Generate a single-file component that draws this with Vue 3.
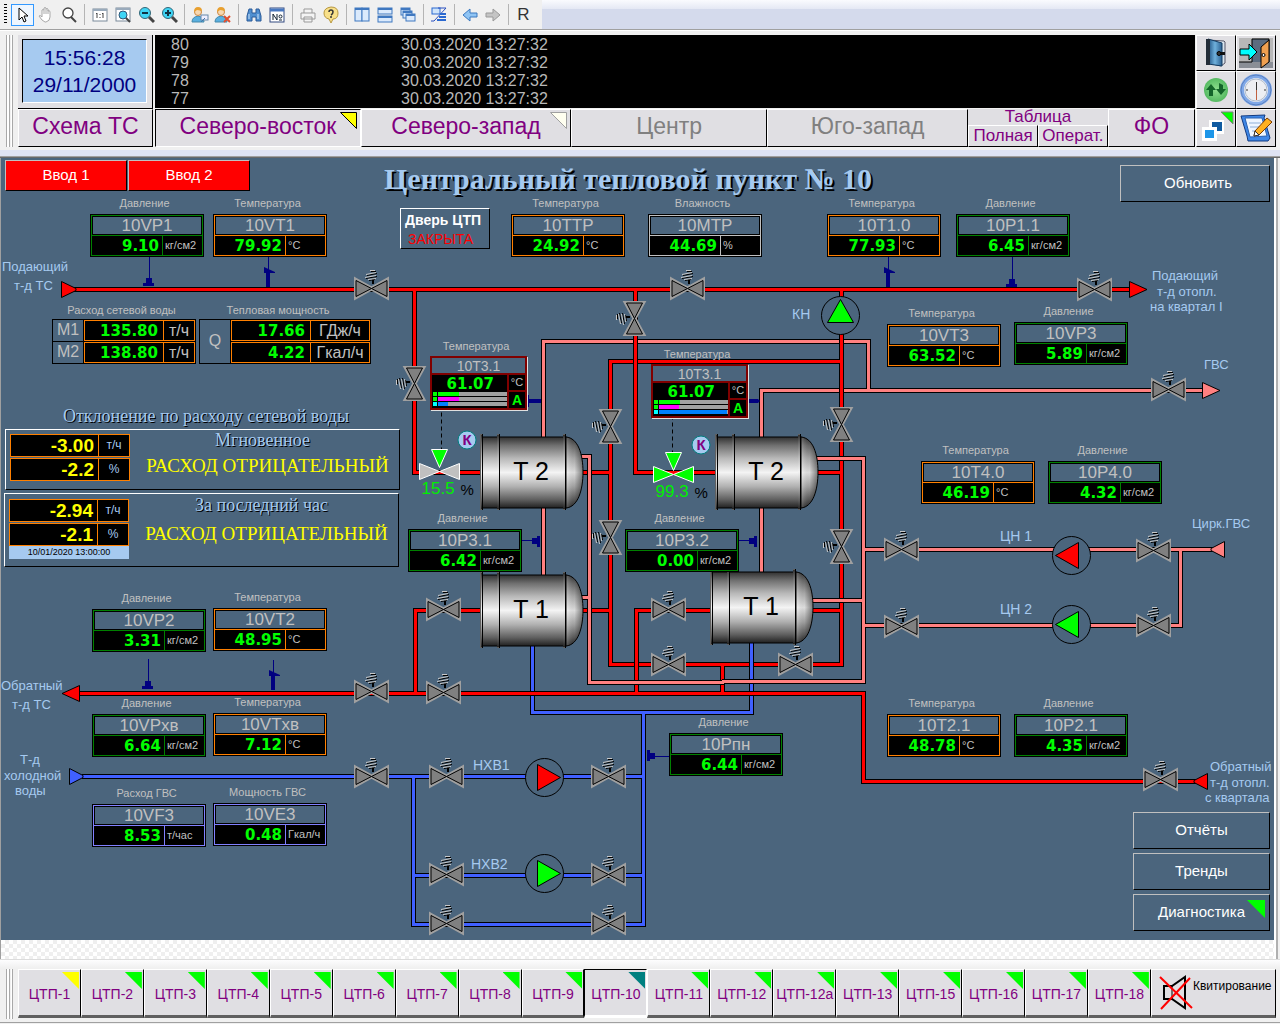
<script setup>
const ORIGIN_Y = 158
const at = (x, y) => ({ left: x + 'px', top: y - ORIGIN_Y + 'px' })

const tools = [
  [
    { name: 'Выбор', active: true, art: '<path d="M5 2v12l3-3 2 5 2-1-2-5h4z" fill="#fff" stroke="#000"/>' },
    { name: 'Панорама', art: '<path d="M5 9V4q1-1 2 0V2q1-1 2 0v1q1-1 2 0v2q2-1 2 1v5q0 4-4 5H8Q5 15 2 10q0-1 2 0l1 1zM7 4v4M9 3v5M11 4v4" fill="#fff" stroke="#a8a8a8"/>' },
    { name: 'Лупа', art: '<circle cx="8" cy="7" r="5" fill="#fff" stroke="#444" stroke-width="1.3"/><path d="M11 11l5 5" stroke="#444" stroke-width="2"/>' }
  ],
  [
    { name: 'Масштаб 1:1', art: '<rect x="2" y="3" width="14" height="12" fill="#fff" stroke="#7a8a9a"/><path d="M2 4h14" stroke="#9ab" stroke-width="2"/><path d="M5 8l1-1v5M11 8l1-1v5M9 8v1M9 11v1" stroke="#444" fill="none"/>' },
    { name: 'Вписать', art: '<rect x="2" y="2" width="14" height="13" fill="#fff" stroke="#7a8a9a"/><path d="M2 3h14" stroke="#9ab" stroke-width="2"/><circle cx="9" cy="9" r="4" fill="#3fd5f5" stroke="#357"/><path d="M12 12l4 4" stroke="#444" stroke-width="2"/>' },
    { name: 'Уменьшить', art: '<circle cx="8" cy="7" r="5.500" fill="#3fd5f5" stroke="#367"/><path d="M5 7h6" stroke="#134" stroke-width="2"/><path d="M12 11l5 5" stroke="#444" stroke-width="3"/>' },
    { name: 'Увеличить', art: '<circle cx="8" cy="7" r="5.500" fill="#3fd5f5" stroke="#367"/><path d="M5 7h6M8 4v6" stroke="#134" stroke-width="2"/><path d="M12 11l5 5" stroke="#444" stroke-width="3"/>' }
  ],
  [
    { name: 'Вход', art: '<path d="M1 16q0-5 6-6 6 1 6 6z" fill="#5ab0e0" stroke="#48a"/><circle cx="7" cy="6" r="3.500" fill="#f8d8b0" stroke="#c84"/><path d="M3 6q0-5 4-5t4 4q-4-1-5-1z" fill="#e8a030"/><rect x="10" y="9" width="7" height="5" fill="#eef" stroke="#68a"/><path d="M10 16l4-4" stroke="#47a"/>' },
    { name: 'Выход', art: '<path d="M1 16q0-5 6-6 6 1 6 6z" fill="#5ab0e0" stroke="#48a"/><circle cx="7" cy="6" r="3.500" fill="#f8d8b0" stroke="#c84"/><path d="M3 6q0-5 4-5t4 4q-4-1-5-1z" fill="#e8a030"/><path d="M10 10l6 6M16 10l-6 6" stroke="#e05030" stroke-width="2"/>' }
  ],
  [
    { name: 'Поиск', art: '<path d="M4 3h3v4h4V3h3l2 7v5h-5v-4H7v4H2v-5z" fill="#4f8fd0" stroke="#2a5a98"/><path d="M4 8v5M13 8v5" stroke="#cfe4fa"/>' },
    { name: 'Номер', art: '<rect x="2" y="2" width="14" height="14" fill="#fff" stroke="#334a80"/><path d="M2 4h14" stroke="#4878c0" stroke-width="3"/><path d="M5 14V8l4 6V8M11 14h3" stroke="#123" fill="none"/><circle cx="12.500" cy="10.500" r="1.500" fill="none" stroke="#123"/>' }
  ],
  [
    { name: 'Печать', art: '<path d="M5 7V3h8v4M2 7h14v6H2zM5 11h8v5H5z" fill="#f4f4f4" stroke="#999"/>' },
    { name: 'Справка', art: '<path d="M9 1q7 0 7 6t-5 6l-2 4-2-4q-5-1-5-6t7-6z" fill="#f8e08a" stroke="#b89840"/><path d="M7 6q0-2 2-2t2 2-2 3M9 10v2" stroke="#333" fill="none" stroke-width="1.500"/>' }
  ],
  [
    { name: 'Рядом', art: '<rect x="2" y="2" width="7" height="13" fill="#dbeafc" stroke="#3f78c0"/><rect x="9" y="2" width="7" height="13" fill="#dbeafc" stroke="#3f78c0"/><path d="M2 3h14" stroke="#3f78c0" stroke-width="2"/>' },
    { name: 'Друг под другом', art: '<rect x="2" y="2" width="14" height="6" fill="#dbeafc" stroke="#3f78c0"/><rect x="2" y="10" width="14" height="6" fill="#dbeafc" stroke="#3f78c0"/><path d="M2 3h14M2 11h14" stroke="#3f78c0" stroke-width="2"/>' },
    { name: 'Каскад', art: '<g fill="#dbeafc" stroke="#3f78c0"><rect x="2" y="2" width="9" height="7"/><rect x="4" y="5" width="9" height="7"/><rect x="7" y="8" width="9" height="7"/></g><path d="M2 3h9M4 6h9M7 9h9" stroke="#3f78c0" stroke-width="2"/>' }
  ],
  [
    { name: 'Настройка', art: '<rect x="2" y="2" width="8" height="6" fill="#cfe4fa" stroke="#2a68d0"/><path d="M8 2h8L4 15H1" fill="none" stroke="#2a50c0"/><path d="M10 8h6M9 11h7M7 14h9" stroke="#2a68d0" stroke-width="2"/>' }
  ],
  [
    { name: 'Назад', art: '<path d="M2 9l7-6v4h7v4H9v4z" fill="#8fc4f4" stroke="#3a78c0"/>' },
    { name: 'Вперёд', art: '<path d="M16 9L9 3v4H2v4h7v4z" fill="#c4c4c4" stroke="#999"/>' }
  ]
]

const log = [80, 79, 78, 77].map((id) => ({ id, time: '30.03.2020 13:27:32' }))

const K = 'кг/см2'
const C = '°C'
const sensors = [
  { x: 90, y: 214, cap: 'Давление', tag: '10VP1', v: '9.10', u: K, kind: 'pressure' },
  { x: 213, y: 214, cap: 'Температура', tag: '10VT1', v: '79.92', u: C, kind: 'temp' },
  { x: 511, y: 214, cap: 'Температура', tag: '10TTP', v: '24.92', u: C, kind: 'temp' },
  { x: 648, y: 214, cap: 'Влажность', tag: '10MTP', v: '44.69', u: '%', kind: 'plain' },
  { x: 827, y: 214, cap: 'Температура', tag: '10T1.0', v: '77.93', u: C, kind: 'temp' },
  { x: 956, y: 214, cap: 'Давление', tag: '10P1.1', v: '6.45', u: K, kind: 'pressure' },
  { x: 887, y: 324, cap: 'Температура', tag: '10VT3', v: '63.52', u: C, kind: 'temp' },
  { x: 1014, y: 322, cap: 'Давление', tag: '10VP3', v: '5.89', u: K, kind: 'pressure' },
  { x: 921, y: 461, cap: 'Температура', tag: '10T4.0', v: '46.19', u: C, kind: 'temp' },
  { x: 1048, y: 461, cap: 'Давление', tag: '10P4.0', v: '4.32', u: K, kind: 'pressure' },
  { x: 887, y: 714, cap: 'Температура', tag: '10T2.1', v: '48.78', u: C, kind: 'temp' },
  { x: 1014, y: 714, cap: 'Давление', tag: '10P2.1', v: '4.35', u: K, kind: 'pressure' },
  { x: 408, y: 529, cap: 'Давление', tag: '10P3.1', v: '6.42', u: K, kind: 'pressure' },
  { x: 625, y: 529, cap: 'Давление', tag: '10P3.2', v: '0.00', u: K, kind: 'pressure' },
  { x: 92, y: 609, cap: 'Давление', tag: '10VP2', v: '3.31', u: K, kind: 'pressure' },
  { x: 213, y: 608, cap: 'Температура', tag: '10VT2', v: '48.95', u: C, kind: 'temp' },
  { x: 92, y: 714, cap: 'Давление', tag: '10VPхв', v: '6.64', u: K, kind: 'pressure' },
  { x: 213, y: 713, cap: 'Температура', tag: '10VTхв', v: '7.12', u: C, kind: 'temp' },
  { x: 92, y: 804, cap: 'Расход ГВС', tag: '10VF3', v: '8.53', u: 'т/час', kind: 'flow' },
  { x: 213, y: 803, cap: 'Мощность ГВС', tag: '10VE3', v: '0.48', u: 'Гкал/ч', kind: 'flow' },
  { x: 669, y: 733, cap: 'Давление', tag: '10Рпн', v: '6.44', u: K, kind: 'pressure' }
]

const loops = [
  { x: 430, y: 356, bars: [30, 30, 14] },
  { x: 651, y: 364, bars: [30, 29, 99] }
]

const RED = '#ff0000'
const PINK = '#ff8080'
const BLUE = '#4060ff'
const pipes = [
  { c: RED, d: 'M841.5 361.5H610.5V664.5H841.5V400M583 472.5H610.5M583 610.5H610.5M817 472.5H841.5M811 610.5H841.5M722.5 664.5V693' },
  { c: RED, d: 'M710 610.5H636.5V693' },
  { c: BLUE, d: 'M82 776.5H643.5M532.5 640V712.5H751.5V640M643.5 712.5V924.5H413.5V776.5M413.5 875.5H643.5' },
  { c: PINK, d: 'M543.5 440V341.5H868.5V390.5M761.5 440V390.5H1205M543.5 505V578M761.5 505V575M578 456.5H589.5V682.5H724M578 597.5H589.5M722 681.5H863.5V458.5H812M808 600.5H863.5M863.5 549.5H1213M863.5 625.5H1180.5V549.5' },
  { c: RED, d: 'M74 289.5H1132M841.5 289.5V440M830 361.5H841.5M414.5 289.5V472.5H482M635.5 289.5V472.5H717' },
  { c: RED, d: 'M78 693.5H863.5V781.5H1196M482 610.5H415.5V693.5M636.5 687V693.5M722.5 687V693.5' }
]

const arrows = [
  { c: RED, p: '61.5,281.5 76,288.5 76,290.5 61.5,297.5' },
  { c: RED, p: '1129.5,281.5 1147,289.5 1129.5,297.5' },
  { c: PINK, p: '1202.5,382.5 1220,390.5 1202.5,398.5' },
  { c: PINK, p: '1224.5,541.5 1211,548.5 1211,550.5 1224.5,557.5' },
  { c: RED, p: '1207.5,773.5 1194,780.5 1194,782.5 1207.5,789.5' },
  { c: RED, p: '79.500,685.5 62,693.5 79.500,701.5' },
  { c: BLUE, p: '69.500,768.5 83,775.5 83,777.5 69.500,784.5' }
]

const valves = [
  [371, 288], [687, 288], [1094, 289], [1168, 389], [901, 549], [901, 626], [1153, 550], [1153, 625],
  [1160, 779], [371, 691], [371, 776], [443, 692], [446, 776], [446, 874], [446, 923],
  [608, 776], [608, 874], [608, 923], [668, 664], [795, 664], [443, 609], [668, 609]
]
const sideValves = [[634, 319], [414, 384], [610, 427], [610, 538], [841, 425], [841, 547]]

const pumps = [
  { x: 840.5, y: 315.5, c: '#00ff00', turn: -90 },
  { x: 1071.5, y: 555.5, c: '#ff0000', turn: 180 },
  { x: 1071.5, y: 624.5, c: '#00ff00', turn: 180 },
  { x: 544.5, y: 777.5, c: '#ff0000', turn: 0 },
  { x: 544.5, y: 873.5, c: '#00ff00', turn: 0 }
]

const tanks = [
  { x: 480, y: 434, t: 'T 2' },
  { x: 480, y: 572, t: 'T 1' },
  { x: 715, y: 434, t: 'T 2' },
  { x: 710, y: 569, t: 'T 1' }
]

const taps = [
  { x: 149, y: 286, turn: 0 },
  { x: 1012, y: 287, turn: 0 },
  { x: 148, y: 689, turn: 0 },
  { x: 540, y: 541, turn: -90 },
  { x: 757, y: 541, turn: -90 },
  { x: 647, y: 756, turn: 90 }
]
const probes = [[268, 287], [888, 287], [273, 690]]

const regulators = [
  { x: 439.5, y: 471.5, c: '#c0c0c0', v: '15.5', lineX: 441.5, kx: 467, ky: 440 },
  { x: 673.5, y: 474.5, c: '#00ff00', v: '99.3', lineX: 672.5, kx: 701, ky: 445 }
]

const labels = [
  [2, 271, 'Подающий'], [14, 290, 'т-д ТС'],
  [1152, 280, 'Подающий'], [1157, 296, 'т-д отопл.'], [1150, 311, 'на квартал I'],
  [1204, 369, 'ГВС'], [1192, 528, 'Цирк.ГВС'],
  [1210, 771, 'Обратный'], [1210, 787, 'т-д отопл.'], [1205, 802, 'с квартала'],
  [1, 690, 'Обратный'], [12, 709, 'т-д ТС'],
  [20, 764, 'Т-д'], [4, 780, 'холодной'], [15, 795, 'воды']
]
const pumpLabels = [
  [792, 319, 'КН'], [1000, 541, 'ЦН 1'], [1000, 614, 'ЦН 2'], [473, 770, 'НХВ1'], [471, 869, 'НХВ2']
]

const stations = ['1', '2', '3', '4', '5', '6', '7', '8', '9', '10', '11', '12', '12а', '13', '15', '16', '17', '18']
const flagOf = (n) => (n === '1' ? 'yellow' : n === '10' ? 'teal' : 'green')
</script>

<template>
  <div class="app">
    <div class="toolbar">
      <div class="tools">
        <span class="dots"></span>
        <template v-for="(group, i) in tools" :key="i">
          <button
            v-for="tool in group"
            :key="tool.name"
            class="tool"
            :class="{ active: tool.active }"
            :aria-label="tool.name"
          >
            <svg width="18" height="18" viewBox="0 0 18 18" fill="none" v-html="tool.art"></svg>
          </button>
          <span class="sep"></span>
        </template>
        <button class="tool letter">R</button>
      </div>
    </div>

    <header class="header">
      <span class="grip"></span>
      <div class="left-col">
        <div class="clock-frame">
          <div class="clock"><span>15:56:28</span><span>29/11/2000</span></div>
        </div>
        <button class="nav">Схема ТС</button>
      </div>
      <div class="mid-col">
        <div class="log">
          <table>
            <tbody>
              <tr v-for="row in log" :key="row.id">
                <td class="log-id">{{ row.id }}</td>
                <td>{{ row.time }}</td>
              </tr>
            </tbody>
          </table>
        </div>
        <nav class="navs">
          <button class="nav w-ne pressed">
            Северо-восток
            <svg class="nav-flag" width="18" height="18"><path d="M.5.5h16v16z" fill="#ffff00" stroke="#000" /></svg>
          </button>
          <button class="nav w-nw">
            Северо-запад
            <svg class="nav-flag" width="18" height="18"><path d="M.5.5h16v16z" fill="#fffff0" stroke="#a0a0a0" /></svg>
          </button>
          <button class="nav w-c muted">Центр</button>
          <button class="nav w-sw muted">Юго-запад</button>
          <div class="tabs w-tab">
            <span class="tabs-title">Таблица</span>
            <div class="tabs-row">
              <button class="nav small">Полная</button>
              <button class="nav small">Операт.</button>
            </div>
          </div>
          <button class="nav w-fo">ФО</button>
        </nav>
      </div>
      <div class="icon-grid">
        <button class="icon-btn" aria-label="Журнал">
          <svg width="30" height="32" viewBox="0 0 30 32">
            <defs><linearGradient id="book"><stop offset="0" stop-color="#1d4f80" /><stop offset=".5" stop-color="#6fb0dc" /><stop offset="1" stop-color="#2a5f90" /></linearGradient></defs>
            <path d="M7 3l16 1 1 1v21l-4 3-13-3z" fill="#d8e4ee" stroke="#556" />
            <path d="M7 2l14 4v23L7 27z" fill="url(#book)" stroke="#123a60" />
            <path d="M5 2h4v26H5z" fill="#222c38" />
            <path d="M16 15h8v3h-8z" fill="#111" /><circle cx="18" cy="16.500" r="2" fill="#333" stroke="#000" />
          </svg>
        </button>
        <button class="icon-btn" aria-label="Выход из системы">
          <svg width="36" height="32" viewBox="0 0 36 32">
            <path d="M1 1h34v25H1z" fill="#b8b8b8" /><path d="M1 25h34v6H1z" fill="#8a8e96" />
            <path d="M14 25V2h17v23" fill="#5c6c80" stroke="#000" />
            <path d="M1 25h13" stroke="#000" />
            <path d="M23 10l8-7v22l-8 6z" fill="#f0a050" stroke="#000" /><circle cx="25.500" cy="18" r="1.500" fill="#fff" stroke="#000" />
            <path d="M2 12h9V7l8 8-8 8v-5H2z" fill="#00ffff" stroke="#000" />
          </svg>
        </button>
        <button class="icon-btn" aria-label="Обмен">
          <svg width="28" height="28" viewBox="0 0 28 28">
            <defs><radialGradient id="sync"><stop offset="0" stop-color="#8fe08f" /><stop offset="1" stop-color="#56ba62" /></radialGradient></defs>
            <circle cx="14" cy="14" r="12" fill="url(#sync)" />
            <path d="M4 14l5-6 5 6h-3v6H7v-6zM14 13l5 6 5-6h-3V9l-4-2v6z" fill="#14652a" />
          </svg>
        </button>
        <button class="icon-btn" aria-label="Время">
          <svg width="32" height="32" viewBox="0 0 32 32">
            <circle cx="16" cy="16" r="14" fill="#eceef2" stroke="#7fa8e8" stroke-width="4" />
            <circle cx="16" cy="16" r="15" fill="none" stroke="#5a80c0" /><circle cx="16" cy="16" r="11" fill="none" stroke="#b0bccc" />
            <path d="M16.500 8v9M6 16h2M24 16h2" stroke="#333" /><path d="M16.500 16v10" stroke="#c06040" />
          </svg>
        </button>
        <button class="icon-btn" aria-label="Окна">
          <svg width="38" height="36" viewBox="0 0 38 36">
            <path d="M12 10h15v14H12z" fill="#fff" /><path d="M15 12h10v9H15z" fill="#105aa0" />
            <path d="M5 17h15v14H5z" fill="#fff" /><path d="M8 20h9v8H8z" fill="#1e96e8" />
            <path d="M24 2h12v12z" fill="#00ff00" stroke="#808080" />
          </svg>
        </button>
        <button class="icon-btn" aria-label="Заметки">
          <svg width="34" height="34" viewBox="0 0 34 34">
            <path d="M2 5l24-1-1 3 6 20-2 3H9l-1-5z" fill="#3f88e8" stroke="#123a80" />
            <path d="M6 7l17 0 5 18-17 1z" fill="#eef6ff" stroke="#2a60b0" />
            <path d="M10 12h12M11 16h10M13 20h7" stroke="#8fb0d8" />
            <path d="M15 25l1-5L28 7l5 4-13 13z" fill="#ffb020" stroke="#7a3a00" /><path d="M15 25l1-5 4 4z" fill="#fff" stroke="#333" />
          </svg>
        </button>
      </div>
    </header>

    <div class="strip"></div>

    <main class="mimic">
      <svg class="scheme" width="1274" height="782" viewBox="0 158 1274 782">
        <defs>
          <linearGradient id="steel" x1="0" y1="0" x2="0" y2="1">
            <stop offset="0" stop-color="#303030" /><stop offset=".12" stop-color="#707070" />
            <stop offset=".3" stop-color="#b8b8b8" /><stop offset=".5" stop-color="#f4f4f4" />
            <stop offset=".7" stop-color="#b0b0b0" /><stop offset=".88" stop-color="#606060" />
            <stop offset="1" stop-color="#202020" />
          </linearGradient>
          <linearGradient id="dome-shade">
            <stop offset="0" stop-color="#fff" stop-opacity=".25" /><stop offset=".5" stop-color="#000" stop-opacity=".1" />
            <stop offset="1" stop-color="#000" stop-opacity=".5" />
          </linearGradient>
          <g id="valve">
            <path d="M-15 -8L.5 .5 16 -8V9L.5 .5 -15 9z" fill="none" stroke="#a0a0a0" stroke-width="4" />
            <path d="M-15 -7.500L.5 .5 -15 8.500zM16 -7.500L.5 .5 16 8.500z" fill="#808080" stroke="#000" />
            <path d="M2 -9V-4" stroke="#000" stroke-width="2" />
            <path d="M0 -16.500H5M-4 -12.500L6 -14.500M-5 -9.500L6 -11.500M-2 -7.500L4 -8.500" stroke="#000" fill="none" />
            <path d="M-1 -17.500H4M-5 -13.500L5 -15.500M-6 -10.500L5 -12.500M-3 -8.500L5 -9.500" stroke="#c8c8c8" fill="none" />
          </g>
          <g id="tank">
            <rect x="2" y="3" width="84" height="71" fill="url(#steel)" stroke="#000" />
            <path d="M86 3C98 4 103 20 103 38S98 73 86 74z" fill="url(#steel)" />
            <path d="M86 3C98 4 103 20 103 38S98 73 86 74z" fill="url(#dome-shade)" stroke="#000" />
            <g fill="#606060">
              <rect x="0" y="0" width="3" height="76" /><rect x="17" y="0" width="3" height="76" /><rect x="83" y="0" width="3" height="76" />
            </g>
            <g fill="url(#steel)">
              <rect x="1" y="1" width="1" height="74" /><rect x="17" y="1" width="2" height="74" /><rect x="83" y="1" width="2" height="74" />
            </g>
            <path d="M2.500 0V76M19.500 0V76M85.500 0V76" stroke="#000" />
          </g>
          <g id="tap" fill="#000080"><path d="M-6 -3H5V0H-6zM-3 -8H3V-3H-3zM0 -30H1V-8H0z" /></g>
          <g id="probe" fill="#000080"><path d="M0 -30H1V-16H0zM-2 -16H2V0H-2zM-4 -20L7 -15V-14H-4z" /></g>
        </defs>

        <g v-for="(pipe, i) in pipes" :key="'p' + i" fill="none">
          <path :d="pipe.d" stroke="#000" stroke-width="5" />
          <path :d="pipe.d" :stroke="pipe.c" stroke-width="3" />
        </g>
        <polygon v-for="(a, i) in arrows" :key="'a' + i" :points="a.p" :fill="a.c" stroke="#000" />

        <g fill="#000080">
          <path d="M527 395h2v12h-2zM529 399h12v4h-12zM748 399h10l2 2-2 2h-10z" />
        </g>
        <use v-for="(t, i) in taps" :key="'t' + i" href="#tap" :transform="`translate(${t.x} ${t.y}) rotate(${t.turn})`" />
        <use v-for="(t, i) in probes" :key="'b' + i" href="#probe" :x="t[0]" :y="t[1]" />
        <use v-for="(v, i) in valves" :key="'v' + i" href="#valve" :x="v[0]" :y="v[1]" />
        <use v-for="(v, i) in sideValves" :key="'s' + i" href="#valve" :transform="`translate(${v[0]} ${v[1]}) rotate(-90)`" />

        <g v-for="(p, i) in pumps" :key="'m' + i" :transform="`translate(${p.x} ${p.y}) rotate(${p.turn})`" stroke="#000">
          <circle r="19" fill="#4b657d" />
          <polygon points="-7,-13 16,0 -7,13" :fill="p.c" />
        </g>

        <g v-for="(t, i) in tanks" :key="'k' + i">
          <use href="#tank" :x="t.x" :y="t.y" />
          <text class="tank-name" :x="t.x + 51" :y="t.y + 46">{{ t.t }}</text>
        </g>

        <g v-for="r in regulators" :key="r.v">
          <path :d="`M${r.lineX} ${r.y - 59}V${r.y - 22}`" stroke="#000" stroke-dasharray="4 3" />
          <g :transform="`translate(${r.x} ${r.y})`" stroke="#fff" :fill="r.c">
            <path d="M-20 -8L0 0 -20 8zM20 -8L0 0 20 8z" />
            <path d="M-8 -22H8L0 -4z" fill="#00ff00" />
          </g>
          <circle :cx="r.kx" :cy="r.ky" r="9" fill="#a6caf0" stroke="#008080" />
          <text class="k-mark" :x="r.kx" :y="r.ky + 5">К</text>
          <text class="opening" :x="r.x - 18" :y="r.y + 22">{{ r.v }}</text>
          <text class="percent" :x="r.x + 21" :y="r.y + 23">%</text>
        </g>

        <text v-for="(l, i) in labels" :key="'l' + i" class="label" :x="l[0]" :y="l[1]">{{ l[2] }}</text>
        <text v-for="(l, i) in pumpLabels" :key="'n' + i" class="label big" :x="l[0]" :y="l[1]">{{ l[2] }}</text>
      </svg>

      <div class="inputs">
        <button class="input-btn">Ввод 1</button>
        <button class="input-btn">Ввод 2</button>
      </div>
      <h1 class="title">Центральный тепловой пункт № 10</h1>
      <button class="plate refresh">Обновить</button>

      <div class="door" :style="at(400, 208)"><b>Дверь ЦТП</b><span>ЗАКРЫТА</span></div>

      <div v-for="s in sensors" :key="s.tag" class="sensor" :class="s.kind" :style="at(s.x, s.y - 18)">
        <span class="caption">{{ s.cap }}</span>
        <div class="sensor-box">
          <div class="tag">{{ s.tag }}</div>
          <div class="value">{{ s.v }}</div>
          <div class="unit">{{ s.u }}</div>
        </div>
      </div>

      <div v-for="l in loops" :key="l.x" class="loop" :style="at(l.x, l.y - 17)">
        <span class="caption">Температура</span>
        <div class="loop-box">
          <div class="loop-tag">10T3.1</div>
          <div class="loop-main">
            <div class="value">61.07</div>
            <div v-for="(w, i) in l.bars" :key="i" class="bar" :class="'bar-' + i">
              <i></i><div class="track"><div class="fill" :style="{ width: w + '%' }"></div></div>
            </div>
          </div>
          <div class="loop-side"><span>°C</span><b>A</b></div>
        </div>
      </div>

      <section class="meter flow-meter" :style="at(52, 303)">
        <span class="caption">Расход сетевой воды</span>
        <div class="meter-grid">
          <div class="meter-key">М1</div><div class="meter-val">135.80</div><div class="meter-unit">т/ч</div>
          <div class="meter-key">М2</div><div class="meter-val">138.80</div><div class="meter-unit">т/ч</div>
        </div>
      </section>
      <section class="meter heat-meter" :style="at(199, 303)">
        <span class="caption">Тепловая мощность</span>
        <div class="meter-grid">
          <div class="meter-key tall">Q</div><div class="meter-val">17.66</div><div class="meter-unit">ГДж/ч</div>
          <div class="meter-val">4.22</div><div class="meter-unit">Гкал/ч</div>
        </div>
      </section>

      <section class="deviation" :style="at(4, 404)">
        <h2>Отклонение по расходу сетевой воды</h2>
        <div class="dev-panel">
          <div class="dev-readings">
            <div class="dev-row"><b>-3.00</b><span>т/ч</span></div>
            <div class="dev-row"><b>-2.2</b><span>%</span></div>
          </div>
          <div class="dev-text"><h3>Мгновенное</h3><p>РАСХОД ОТРИЦАТЕЛЬНЫЙ</p></div>
        </div>
        <div class="dev-panel hour">
          <div class="dev-readings">
            <div class="dev-row"><b>-2.94</b><span>т/ч</span></div>
            <div class="dev-row"><b>-2.1</b><span>%</span></div>
            <div class="dev-date">10/01/2020 13:00:00</div>
          </div>
          <div class="dev-text"><h3>За последний час</h3><p>РАСХОД ОТРИЦАТЕЛЬНЫЙ</p></div>
        </div>
      </section>

      <div class="actions">
        <button class="plate">Отчёты</button>
        <button class="plate">Тренды</button>
        <button class="plate">Диагностика<svg class="plate-flag" width="18" height="18"><path d="M0 0h18v18z" fill="#00ff00" /></svg></button>
      </div>
    </main>

    <div class="void"></div>

    <footer class="footer">
      <span class="grip"></span>
      <nav class="stations">
        <button v-for="n in stations" :key="n" class="station" :class="{ current: n === '10' }">
          ЦТП-{{ n }}
          <span class="flag" :class="flagOf(n)"></span>
        </button>
      </nav>
      <button class="ack">
        <svg width="36" height="36" viewBox="0 0 36 36" fill="none">
          <path d="M6 11h8L27 2v31L14 24H6z" stroke="#000" stroke-width="2" /><path d="M14 11v13" stroke="#000" />
          <path d="M2 2l32 31M32 3L3 34" stroke="#f00" stroke-width="2" />
        </svg>
        <span>Квитирование</span>
      </button>
    </footer>
  </div>
</template>

<style>
body {
  margin: 0;
}
</style>

<style scoped>
.app {
  display: flex;
  flex-direction: column;
  min-width: 1280px;
  min-height: 100vh;
  background: #f0f0f0;
  font-family: "Liberation Sans", Arial, sans-serif;
}
.app * {
  box-sizing: border-box;
}
button {
  margin: 0;
  padding: 0;
  border: 0;
  background: none;
  font: inherit;
  color: inherit;
}
h1, h2, h3, p {
  margin: 0;
  font-weight: 400;
}

.toolbar {
  height: 30px;
  background: linear-gradient(#fafbfe 0, #e4e8f4 9px, #d4daec 9px);
  border-bottom: 1px solid #a0a0a0;
}
.tools {
  display: inline-flex;
  align-items: center;
  height: 29px;
  width: 542px;
  background: #f0f0f0;
}
.dots {
  width: 3px;
  height: 21px;
  margin: 0 4px;
  background: repeating-linear-gradient(#000 0 1px, transparent 1px 3px);
}
.tool {
  display: flex;
  align-items: center;
  justify-content: center;
  width: 23px;
  height: 22px;
}
.tool.active {
  border: 1px solid #3399ff;
  background: #eef6ff;
}
.letter {
  font-size: 17px;
  color: #333;
}
.sep {
  width: 1px;
  height: 21px;
  margin: 0 3px 0 4px;
  background: #b4b4b4;
}

.header {
  display: flex;
  height: 118px;
  padding: 4px 4px 1px 0;
  border-top: 1px solid #fff;
}
.grip {
  flex: none;
  width: 7px;
  margin: 0 5px 0 6px;
  border: solid #a8a8a8;
  border-width: 0 1px;
  background: linear-gradient(90deg, #fff 0 2px, #a8a8a8 2px 3px, transparent 3px 4px, #fff 4px);
}
.left-col {
  display: flex;
  flex-direction: column;
  width: 135px;
  margin-right: 2px;
}
.clock-frame {
  height: 74px;
  padding: 4px 5px 5px 4px;
  background: #e0dfe3;
  border: solid #000;
  border-width: 0 1px 1px 0;
}
.clock {
  display: flex;
  flex-direction: column;
  align-items: center;
  justify-content: center;
  height: 100%;
  background: #a6caf0;
  border: 1px solid;
  border-color: #000 #fff #fff #000;
  color: #000080;
  font-size: 21px;
  line-height: 27px;
}
.mid-col {
  flex: 1;
}
.log {
  height: 73px;
  margin-bottom: 1px;
  padding-top: 1px;
  background: #000;
  color: #b8b8b8;
  font-size: 16px;
  line-height: 18px;
}
.log table {
  border-collapse: collapse;
}
.log td {
  padding: 0;
}
.log .log-id {
  width: 246px;
  padding-left: 16px;
}
.nav {
  position: relative;
  width: 100%;
  height: 38px;
  padding-bottom: 4px;
  background: #e0dfe3;
  border: 1px solid;
  border-color: #fff #000 #000 #fff;
  color: #800080;
  font-size: 23px;
  white-space: nowrap;
}
.nav.pressed {
  border-color: #000 #fff #fff #000;
}
.nav.muted {
  color: #808080;
}
.navs {
  display: flex;
}
.w-ne { flex: 206 1 0; }
.w-nw { flex: 210 1 0; }
.w-c { flex: 196 1 0; }
.w-sw { flex: 201 1 0; }
.w-tab { flex: 141 1 0; }
.w-fo { flex: 86 1 0; }
.nav-flag {
  position: absolute;
  top: 2px;
  right: 2px;
}
.tabs {
  display: flex;
  flex-direction: column;
  align-items: center;
  background: #e0dfe3;
  color: #800080;
}
.tabs-title {
  font-size: 17px;
  line-height: 16px;
}
.tabs-row {
  display: flex;
  width: 100%;
}
.nav.small {
  height: 22px;
  padding: 0;
  font-size: 17px;
  line-height: 18px;
}
.icon-grid {
  display: grid;
  grid-template-columns: 40px 40px;
  grid-template-rows: 36px 38px 38px;
  margin-left: 1px;
}
.icon-btn {
  display: flex;
  align-items: center;
  justify-content: center;
  background: #e0dfe3;
  border: 1px solid;
  border-color: #fff #000 #000 #fff;
}
.strip {
  height: 10px;
  background: linear-gradient(#f0f0f0 0 2px, #dfe3f3 2px 8px, #a0a0a0 8px 9px, #696969 9px);
}

.mimic {
  position: relative;
  height: 782px;
  margin-right: 6px;
  background: #4b657d;
  box-shadow: inset 1px 0 #a0a0a0, 2px 0 #fff, 4px 0 #b0b0b0;
}
.scheme {
  position: absolute;
  left: 0;
  top: 0;
}
.tank-name {
  font-size: 25px;
  text-anchor: middle;
}
.k-mark {
  font-size: 15px;
  font-weight: 700;
  text-anchor: middle;
  fill: #800080;
}
.opening {
  font-size: 17px;
  fill: #00f000;
}
.percent {
  font-size: 15px;
}
.label {
  font-size: 13px;
  fill: #a6caf0;
}
.label.big {
  font-size: 14px;
}

.inputs {
  position: absolute;
  left: 5px;
  top: 2px;
  display: flex;
  gap: 1px;
}
.input-btn {
  width: 122px;
  height: 31px;
  padding-bottom: 2px;
  background: #f00;
  border: 1px solid;
  border-color: #c0c0c0 #000 #000 #c0c0c0;
  color: #fff;
  font-size: 15px;
}
.title {
  position: absolute;
  left: 384px;
  top: 3px;
  color: #a6caf0;
  font: 700 30px/36px "Liberation Serif", "Times New Roman", serif;
  text-shadow: 2px 2px #000;
  white-space: nowrap;
}
.plate {
  position: relative;
  width: 137px;
  height: 37px;
  padding-bottom: 2px;
  border: 1px solid;
  border-color: #c0c0c0 #000 #000 #c0c0c0;
  color: #fff;
  font-size: 15px;
}
.refresh {
  position: absolute;
  right: 4px;
  top: 7px;
  width: 150px;
  padding-left: 6px;
}
.actions {
  position: absolute;
  right: 4px;
  bottom: 9px;
  display: flex;
  flex-direction: column;
  gap: 4px;
}
.plate-flag {
  position: absolute;
  top: 5px;
  right: 4px;
}
.door {
  position: absolute;
  display: flex;
  flex-direction: column;
  width: 90px;
  height: 41px;
  padding: 2px 0 0 4px;
  border: 1px solid;
  border-color: #fff #000 #000 #fff;
  color: #fff;
  font-size: 14px;
  line-height: 19px;
  white-space: nowrap;
}
.door span {
  padding-left: 3px;
  color: #f00;
}

.caption {
  display: block;
  margin-bottom: 4px;
  padding-right: 5px;
  color: #c0c0c0;
  font-size: 11px;
  line-height: 14px;
  text-align: center;
  white-space: nowrap;
}
.sensor {
  position: absolute;
  width: 114px;
  --edge: #008000;
}
.temp { --edge: #ff8000; }
.plain { --edge: #c0c0c0; }
.flow { --edge: #8080ff; }
.sensor-box {
  display: grid;
  grid-template: 19px 19px / 70px 39px;
  gap: 1px;
  padding: 1px;
  border: 1px solid #000;
  background: var(--edge);
}
.tag {
  grid-column: span 2;
  background: #4b657d;
  border: 1px solid #000;
  color: #c0c0c0;
  font-size: 17px;
  line-height: 18px;
  text-align: center;
}
.value {
  padding-right: 3px;
  background: #000;
  color: #0f0;
  font: 700 15px/21px "DejaVu Sans", Verdana, sans-serif;
  text-align: right;
}
.unit {
  padding-left: 2px;
  background: #000;
  color: #c0c0c0;
  font-size: 11px;
  line-height: 19px;
  white-space: nowrap;
}

.loop {
  position: absolute;
  width: 97px;
}
.loop .caption {
  margin-bottom: 3px;
}
.loop-box {
  display: grid;
  grid-template: 15px 33px / 75px 16px;
  gap: 2px;
  padding: 2px;
  background: #800000;
  box-shadow: 1px 1px #e0e0e0;
}
.loop-tag {
  grid-column: span 2;
  background: #4b657d;
  color: #c0c0c0;
  font-size: 14px;
  line-height: 16px;
  text-align: center;
}
.loop-main {
  padding: 0 0 0 1px;
  background: #000;
}
.loop-main .value {
  height: 17px;
  padding-right: 13px;
  line-height: 18px;
}
.bar {
  display: flex;
  gap: 1px;
  height: 4px;
  margin-bottom: 1px;
}
.bar i {
  width: 4px;
  background: #0f0;
}
.track {
  flex: 1;
  background: #a0a0a0;
}
.fill {
  height: 100%;
  background: #0f0;
}
.bar-1 .fill { background: #f0f; }
.bar-2 .fill { background: #0080ff; }
.bar-2 i { background: #0ff; }
.loop-side {
  display: grid;
  grid-template-rows: 15px 16px;
  gap: 2px;
  color: #c0c0c0;
  font-size: 11px;
  line-height: 14px;
  text-align: center;
}
.loop-side span, .loop-side b {
  background: #000;
}
.loop-side b {
  color: #0f0;
  font-size: 14px;
  line-height: 16px;
}

.meter {
  position: absolute;
}
.meter .caption {
  margin-bottom: 2px;
}
.meter-grid {
  display: grid;
  grid-template-rows: 21px 21px;
  gap: 1px;
  padding: 1px;
  background: #000;
  color: #c0c0c0;
  font-size: 16px;
  line-height: 20px;
  text-align: center;
}
.flow-meter {
  width: 144px;
}
.flow-meter .meter-grid {
  grid-template-columns: 30px 80px 30px;
}
.heat-meter {
  width: 172px;
}
.heat-meter .caption {
  padding-right: 14px;
}
.heat-meter .meter-grid {
  grid-template-columns: 30px 80px 58px;
}
.meter-key {
  background: #4b657d;
}
.tall {
  grid-row: span 2;
  line-height: 42px;
}
.meter-val {
  padding-right: 5px;
  border: 1px solid #ff8000;
  color: #0f0;
  font: 700 15px/21px "DejaVu Sans", Verdana, sans-serif;
  text-align: right;
}
.meter-unit {
  margin-left: -2px;
  border: 1px solid #ff8000;
}

.deviation {
  position: absolute;
  width: 396px;
}
.deviation h2, .deviation h3 {
  color: #a6caf0;
  font: 400 18px/24px "Liberation Serif", "Times New Roman", serif;
  text-shadow: 1px 1px #000;
  text-align: center;
}
.deviation h2 {
  padding-left: 8px;
  line-height: 25px;
}
.deviation h3 {
  padding-right: 10px;
}
.dev-panel {
  display: flex;
  height: 61px;
  margin: 0 0 3px 1px;
  padding: 4px;
  border: 1px solid;
  border-color: #fff #000 #000 #fff;
}
.dev-panel.hour {
  height: 74px;
  margin: 0 1px 0 0;
  padding: 5px 4px;
}
.dev-readings {
  width: 120px;
}
.dev-row {
  display: flex;
  height: 23px;
  margin-bottom: 1px;
  border: 1px solid #ff8000;
  background: #000;
  color: #a6caf0;
  font-size: 12px;
  line-height: 21px;
  text-align: center;
}
.dev-row b {
  width: 88px;
  padding-right: 4px;
  border-right: 1px solid #ff8000;
  color: #ff0;
  font-size: 19px;
  line-height: 22px;
  text-align: right;
}
.dev-row span {
  flex: 1;
}
.dev-date {
  height: 13px;
  margin-top: -1px;
  background: #a6caf0;
  font-size: 9px;
  line-height: 13px;
  text-align: center;
}
.dev-text {
  flex: 1;
  margin: -6px 0 0 10px;
  text-align: center;
}
.dev-text p {
  color: #ff0;
  font: 400 19px/28px "Liberation Serif", "Times New Roman", serif;
  white-space: nowrap;
}
.hour p {
  line-height: 34px;
}

.void {
  flex: 1;
  min-height: 19px;
  margin-right: 6px;
  background: repeating-conic-gradient(#efefef 0 25%, #fff 0 50%) 0 0 / 8px 8px;
  border-left: 1px solid #a0a0a0;
  box-shadow: 2px 0 #fff, 4px 0 #b0b0b0;
}
.footer {
  display: flex;
  height: 65px;
  padding: 9px 4px 5px 0;
  border-top: 1px solid #dcdcdc;
  background: linear-gradient(#fdfdfe, #f0f0f0 8px);
  box-shadow: inset 0 -1px #f0f0f0, inset 0 -2px #a0a0a0;
}
.stations {
  display: flex;
  flex: 1;
}
.station {
  position: relative;
  flex: 1;
  height: 49px;
  background: #e0dfe3;
  border: solid;
  border-width: 1px 1px 3px 1px;
  border-color: #fff #000 #606060 #fff;
  color: #800080;
  font-size: 14px;
  line-height: 20px;
  padding-top: 2px;
  white-space: nowrap;
}
.station.current {
  border-color: #000 #fff #fff #000;
}
.flag {
  position: absolute;
  top: 2px;
  right: 1px;
  width: 17px;
  height: 17px;
  clip-path: polygon(0 0, 100% 0, 100% 100%);
}
.green { background: #0f0; }
.yellow { background: #ff0; }
.teal { background: #008080; }
.ack {
  display: flex;
  align-items: center;
  width: 125px;
  height: 49px;
  padding-left: 6px;
  background: #e0dfe3;
  border: solid;
  border-width: 1px 1px 3px 1px;
  border-color: #fff #000 #606060 #fff;
  font-size: 12px;
}
.ack svg {
  flex: none;
}
.ack span {
  align-self: flex-start;
  margin: 9px 0 0 -1px;
}
</style>
